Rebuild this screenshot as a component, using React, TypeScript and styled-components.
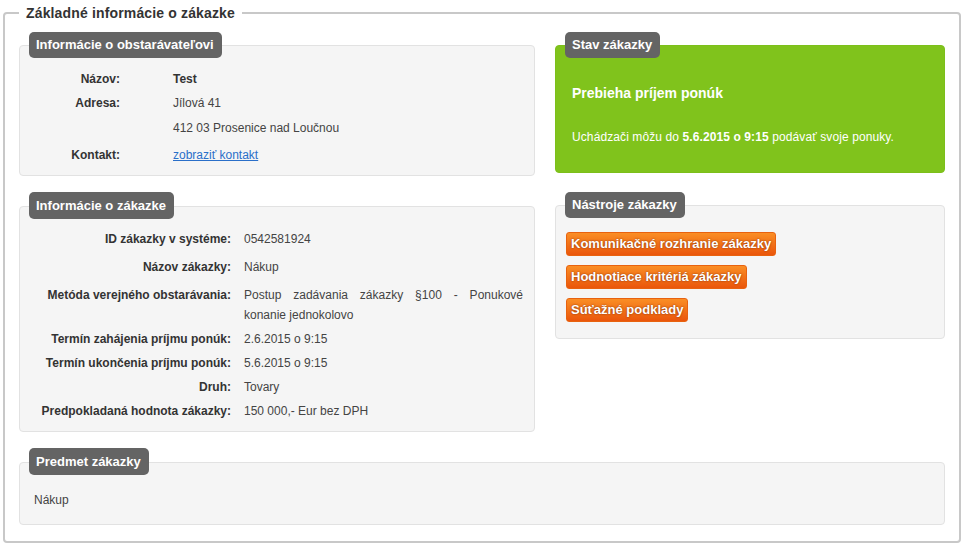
import styled, { createGlobalStyle } from "styled-components";

const GlobalStyle = createGlobalStyle`
  html, body {
    margin: 0;
    padding: 0;
    background: #fff;
  }
  body {
    font-family: "Liberation Sans", Arial, sans-serif;
    font-size: 12px;
    color: #444;
  }
`;

const Frame = styled.fieldset`
  margin: 4px 3px 2px;
  padding: 0 14px 16px;
  border: 2px solid #c8c8c8;
  border-radius: 4px;
  min-width: 0;
`;

const FrameTitle = styled.legend`
  padding: 0 7px;
  font-size: 14px;
  line-height: 18px;
  font-weight: bold;
  letter-spacing: 0.15px;
  color: #333;
`;

const Columns = styled.div`
  display: grid;
  grid-template-columns: 516px 1fr;
  column-gap: 20px;
  margin-top: 10px;
`;

const Stack = styled.div<{ $gap: number }>`
  display: flex;
  flex-direction: column;
  gap: ${(p) => p.$gap}px;
`;

const Section = styled.section<{ $top?: number }>`
  display: flex;
  flex-direction: column;
  align-items: flex-start;
  margin-top: ${(p) => p.$top ?? 0}px;
`;

const Tag = styled.div<{ $h?: number }>`
  position: relative;
  z-index: 1;
  margin: 0 0 -13px 10px;
  height: ${(p) => p.$h ?? 26}px;
  padding: 0 8px 0 7px;
  border-radius: 5px;
  background: #646464;
  color: #fff;
  font-size: 13px;
  font-weight: bold;
  line-height: ${(p) => p.$h ?? 26}px;
  white-space: nowrap;
`;

const Box = styled.div<{ $pad: string; $green?: boolean }>`
  align-self: stretch;
  box-sizing: border-box;
  padding: ${(p) => p.$pad};
  border: 1px solid ${(p) => (p.$green ? "#7cbf1a" : "#e2e2e2")};
  border-radius: 4px;
  background: ${(p) => (p.$green ? "#80c31c" : "#f5f5f5")};
  color: ${(p) => (p.$green ? "#fff" : "#444")};
`;

const InfoGrid = styled.div<{ $label: number; $gap: number }>`
  display: grid;
  grid-template-columns: ${(p) => p.$label}px 1fr;
  column-gap: ${(p) => p.$gap}px;
`;

const Cell = styled.div<{ $h: number; $top: number }>`
  min-height: ${(p) => p.$h}px;
  padding-top: ${(p) => p.$top}px;
  box-sizing: border-box;
  line-height: 20px;
`;

const Label = styled(Cell)`
  font-weight: bold;
  color: #333;
  text-align: right;
  white-space: nowrap;
`;

const Value = styled(Cell)<{ $bold?: boolean }>`
  text-align: justify;
  font-weight: ${(p) => (p.$bold ? "bold" : "normal")};
  color: ${(p) => (p.$bold ? "#333" : "#444")};
`;

const Link = styled.a`
  color: #2a6fc9;
  text-decoration: underline;
`;

const StatusTitle = styled.div`
  font-size: 14px;
  font-weight: bold;
  line-height: 20px;
`;

const StatusText = styled.div`
  margin-top: 24px;
  line-height: 20px;
  letter-spacing: 0.1px;
  b {
    font-weight: bold;
  }
`;

const Buttons = styled.div`
  display: flex;
  flex-direction: column;
  align-items: flex-start;
  gap: 9px;
`;

const ToolButton = styled.button`
  height: 24px;
  padding: 0 4px;
  border: 1px solid #e8620f;
  border-radius: 3px;
  background: linear-gradient(#fa8e25, #ea560b);
  color: #fff;
  font-family: "Liberation Sans", Arial, sans-serif;
  font-size: 13px;
  font-weight: bold;
  line-height: 22px;
  text-shadow: 0 0 2px rgba(110, 35, 0, 0.9);
  cursor: pointer;
`;

const Plain = styled.div`
  line-height: 20px;
`;

type Row = { label: string; value: string; h: number; top: number; bold?: boolean };

const vendorRows: Row[] = [
  { label: "Názov:", value: "Test", h: 24, top: 2, bold: true },
  { label: "Adresa:", value: "Jílová 41", h: 24, top: 2 },
  { label: "", value: "412 03 Prosenice nad Loučnou", h: 26, top: 3 },
];

const orderRows: Row[] = [
  { label: "ID zákazky v systéme:", value: "0542581924", h: 28, top: 4 },
  { label: "Názov zákazky:", value: "Nákup", h: 28, top: 4 },
  {
    label: "Metóda verejného obstarávania:",
    value: "Postup zadávania zákazky §100 - Ponukové konanie jednokolovo",
    h: 46,
    top: 4,
  },
  { label: "Termín zahájenia príjmu ponúk:", value: "2.6.2015 o 9:15", h: 24, top: 2 },
  { label: "Termín ukončenia príjmu ponúk:", value: "5.6.2015 o 9:15", h: 24, top: 2 },
  { label: "Druh:", value: "Tovary", h: 24, top: 2 },
  { label: "Predpokladaná hodnota zákazky:", value: "150 000,- Eur bez DPH", h: 24, top: 2 },
];

export default function App() {
  return (
    <>
      <GlobalStyle />
      <Frame>
        <FrameTitle>Základné informácie o zákazke</FrameTitle>
        <Columns>
          <Stack $gap={16}>
            <Section>
              <Tag>Informácie o obstarávateľovi</Tag>
              <Box $pad="21px 12px 6px 0">
                <InfoGrid $label={100} $gap={53}>
                  {vendorRows.flatMap((r, i) => [
                    <Label key={`l${i}`} $h={r.h} $top={r.top}>{r.label}</Label>,
                    <Value key={`v${i}`} $h={r.h} $top={r.top} $bold={r.bold}>{r.value}</Value>,
                  ])}
                  <Label $h={28} $top={4}>Kontakt:</Label>
                  <Value $h={28} $top={4}>
                    <Link href="#">zobraziť kontakt</Link>
                  </Value>
                </InfoGrid>
              </Box>
            </Section>
            <Section>
              <Tag $h={27}>Informácie o zákazke</Tag>
              <Box $pad="18px 11px 8px 0">
                <InfoGrid $label={211} $gap={13}>
                  {orderRows.flatMap((r, i) => [
                    <Label key={`l${i}`} $h={r.h} $top={r.top}>{r.label}</Label>,
                    <Value key={`v${i}`} $h={r.h} $top={r.top}>{r.value}</Value>,
                  ])}
                </InfoGrid>
              </Box>
            </Section>
          </Stack>
          <Stack $gap={19}>
            <Section>
              <Tag>Stav zákazky</Tag>
              <Box $green $pad="37px 16px 25px 16px">
                <StatusTitle>Prebieha príjem ponúk</StatusTitle>
                <StatusText>
                  Uchádzači môžu do <b>5.6.2015 o 9:15</b> podávať svoje ponuky.
                </StatusText>
              </Box>
            </Section>
            <Section>
              <Tag>Nástroje zákazky</Tag>
              <Box $pad="26px 10px 16px 10px">
                <Buttons>
                  <ToolButton>Komunikačné rozhranie zákazky</ToolButton>
                  <ToolButton>Hodnotiace kritériá zákazky</ToolButton>
                  <ToolButton>Súťažné podklady</ToolButton>
                </Buttons>
              </Box>
            </Section>
          </Stack>
        </Columns>
        <Section $top={16}>
          <Tag $h={27}>Predmet zákazky</Tag>
          <Box $pad="27px 14px 14px 14px">
            <Plain>Nákup</Plain>
          </Box>
        </Section>
      </Frame>
    </>
  );
}
